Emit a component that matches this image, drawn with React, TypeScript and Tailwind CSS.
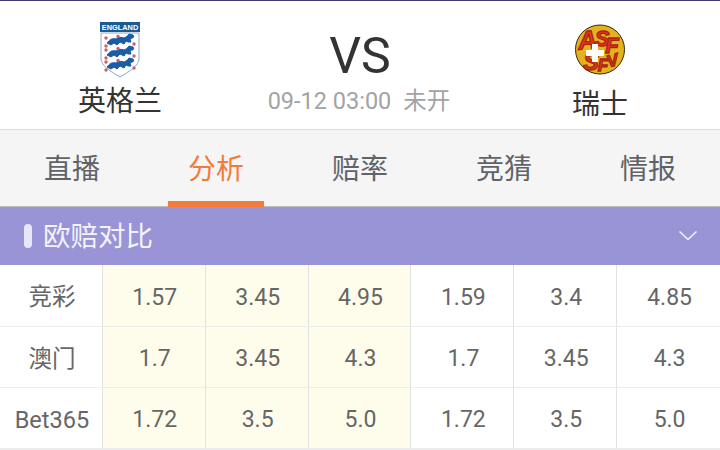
const FONT = { fontFamily: 'Roboto, "Noto Sans CJK SC", sans-serif' };

function EnglandCrest() {
  const lion = (y: number) => (
    <g key={y}>
      <path
        d={`M8 ${y + 1}c2-3 5-4 8-3 3-2 6-2 8-1 2-1 4-2 5-4l4 1c1 1 1 3-1 3l-2 1 1 3-3 0-2-1-2 3-4-2-3 3-3-2-3 2-4-2z`}
        fill="#1a5da6"
        stroke="#1a5da6"
        strokeWidth="1"
      />
      <circle cx="6" cy={y - 3} r="1.700" fill="#c9606f" />
      <circle cx="18" cy={y - 4.500} r="1.700" fill="#c9606f" />
      <circle cx="6" cy={y + 5} r="1.700" fill="#c9606f" />
      <circle cx="34" cy={y + 3} r="1.700" fill="#c9606f" />
    </g>
  );
  return (
    <svg width="40" height="56" viewBox="0 0 40 56" aria-hidden="true">
      <rect x="0" y="0" width="40" height="10" fill="#1b5a94" />
      <path d="M1 11h38v25c0 8-9 13-19 19C10 49 1 44 1 36z" fill="#fff" stroke="#8fa9c4" strokeWidth="1" />
      {lion(19)}
      {lion(31)}
      {lion(43)}
      <text x="20" y="8" textAnchor="middle" fontSize="7.400" fontWeight="700" fill="#fff" fontFamily="Liberation Sans, sans-serif">ENGLAND</text>
    </svg>
  );
}

function SwissCrest() {
  const letter = (c: string, x: number, y: number, size: number, r: number) => (
    <text
      key={`${c}${x}`}
      x={x}
      y={y}
      transform={`rotate(${r} ${x} ${y})`}
      textAnchor="middle"
      fontSize={size}
      fontWeight="700"
      fontStyle="italic"
      fontFamily="Liberation Sans, sans-serif"
      fill="#e2371f"
      stroke="#a82512"
      strokeWidth="1.300"
    >
      {c}
    </text>
  );
  return (
    <svg className="overflow-visible" width="50" height="51" viewBox="0 0 50 51" aria-hidden="true">
      <circle cx="25" cy="25.500" r="24.500" fill="#e3b21c" stroke="#33260e" strokeWidth="1" />
      {letter("A", 13, 25, 26, -5)}
      {letter("S", 27, 22, 22, 0)}
      {letter("F", 37, 29, 22, 0)}
      {letter("S", 16, 46, 23, 0)}
      {letter("F", 28, 47, 17, 0)}
      {letter("V", 39, 42, 17, -15)}
      <path d="M17 20h6v6h6v6h-6v6h-6v-6h-6v-6h6z" fill="#fff" />
    </svg>
  );
}

const tabs = ["直播", "分析", "赔率", "竞猜", "情报"];
const rows = [
  ["竞彩", "1.57", "3.45", "4.95", "1.59", "3.4", "4.85"],
  ["澳门", "1.7", "3.45", "4.3", "1.7", "3.45", "4.3"],
  ["Bet365", "1.72", "3.5", "5.0", "1.72", "3.5", "5.0"],
];

export default function App() {
  return (
    <div className="w-[720px] h-[450px] overflow-hidden bg-white flex flex-col" style={FONT}>
      <div className="h-px bg-[#3f3570]" />
      <header className="h-[129px] flex border-b border-[#dcdcdc]">
        <div className="w-[240px] flex flex-col items-center pt-[21px]">
          <EnglandCrest />
          <div className="text-[28px] leading-[32px] mt-[8px] text-[#333]">英格兰</div>
        </div>
        <div className="w-[240px] flex flex-col items-center">
          <div className="text-[50px] leading-[58px] mt-[26px] text-[#333]">VS</div>
          <div className="text-[23.500px] leading-[28px] mt-[2px] pr-[2px] text-[#a3a3a3] flex gap-[12px]">
            <span>09-12 03:00</span>
            <span>未开</span>
          </div>
        </div>
        <div className="w-[240px] flex flex-col items-center pt-[23px]">
          <SwissCrest />
          <div className="text-[28px] leading-[32px] mt-[14px] text-[#333]">瑞士</div>
        </div>
      </header>
      <nav className="h-[77px] flex bg-[#f5f5f5] border-b border-[#bdbdbd]">
        {tabs.map((t, i) => (
          <div key={t} className="w-[144px] flex justify-center relative">
            <span className={`text-[28px] leading-[80px] ${i === 1 ? "text-[#f47a3a]" : "text-[#5f6368]"}`}>{t}</span>
            {i === 1 && <div className="absolute bottom-[-1px] left-[24px] w-[96px] h-[6px] bg-[#f47a3a]" />}
          </div>
        ))}
      </nav>
      <section className="h-[58px] bg-[#9894d6] flex items-center pl-[24px] pr-[22px]">
        <div className="w-[8px] h-[24px] rounded-full bg-[#e8e7f8]" />
        <div className="ml-[11px] pt-px text-[27.500px] leading-[58px] text-[#f3f3fb]">欧赔对比</div>
        <svg className="ml-auto" width="20" height="12" viewBox="0 0 20 12" aria-hidden="true">
          <path d="M1.500 1.500L10 9.500l8.500-8" fill="none" stroke="#f3f3fb" strokeWidth="1.600" />
        </svg>
      </section>
      <div className="flex-1 flex flex-col bg-[#e8e8e8]">
        {rows.map((r, i) => (
          <div key={r[0]} className={`flex border-b border-[#ececec] text-[#666] bg-white ${i === 0 ? "h-[62px]" : "h-[61px]"}`}>
            {r.map((c, j) => (
              <div
                key={j}
                className={`w-[103px] pt-[5px] pl-[2px] flex items-center justify-center ${j === 0 ? "text-[23.500px]" : "text-[23px]"} ${j < 6 ? "border-r border-[#e2e2e2]" : ""} ${j >= 1 && j <= 3 ? "bg-[#fefdec]" : ""}`}
              >
                {c}
              </div>
            ))}
          </div>
        ))}
      </div>
    </div>
  );
}
